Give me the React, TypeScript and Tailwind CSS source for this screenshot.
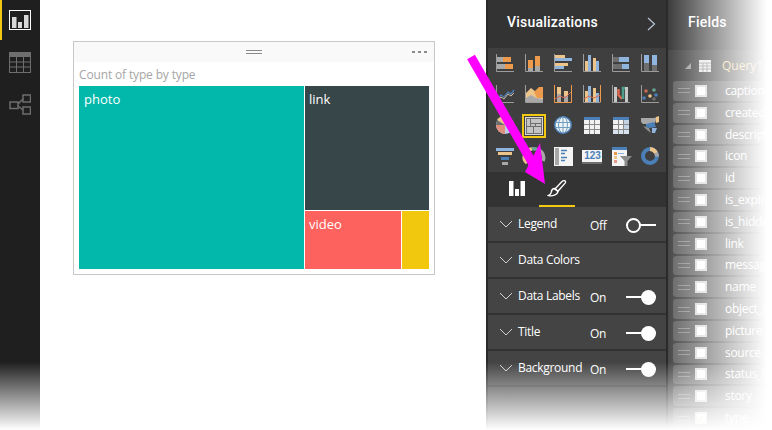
import type { ReactNode } from 'react';

const O = '#ee9a4d';
const T = '#edc58a';
const B = '#8fb4dd';
const G = '#a8a8a8';
const D = '#6e6e6e';
const A = '#9c9c9c';
const R = '#d9694f';
const M = '#4a7fb8';

const Axis = () => <path d="M.5 0V17.5H18" stroke={A} fill="none" />;

const Bar = ({ x, y, w, h, c }: { x: number; y: number; w: number; h: number; c: string }) => (
  <rect x={x} y={y} width={w} height={h} fill={c} />
);

const VIZ_ICONS: ReactNode[] = [
  <><Axis /><Bar x={1} y={3} w={6} h={5} c={G} /><Bar x={7} y={3} w={8} h={5} c={O} /><Bar x={1} y={10} w={8} h={5} c={G} /><Bar x={9} y={10} w={8} h={5} c={O} /></>,
  <><Axis /><Bar x={3} y={6} w={5} h={8} c={O} /><Bar x={3} y={14} w={5} h={3} c={G} /><Bar x={10} y={2} w={5} h={10} c={O} /><Bar x={10} y={12} w={5} h={5} c={G} /></>,
  <><Axis /><Bar x={1} y={1} w={10} h={3} c={T} /><Bar x={1} y={4} w={17} h={3} c={B} /><Bar x={1} y={9} w={13} h={3} c={T} /><Bar x={1} y={12} w={9} h={3} c={B} /></>,
  <><Axis /><Bar x={2} y={7} w={3} h={10} c={T} /><Bar x={5} y={1} w={3} h={16} c={B} /><Bar x={10} y={4} w={3} h={13} c={T} /><Bar x={13} y={7} w={3} h={10} c={B} /></>,
  <><Axis /><Bar x={1} y={3} w={6} h={5} c={D} /><Bar x={7} y={3} w={10} h={5} c={B} /><Bar x={1} y={10} w={9} h={5} c={D} /><Bar x={10} y={10} w={7} h={5} c={B} /></>,
  <><Axis /><Bar x={3} y={1} w={5} h={8} c={B} /><Bar x={3} y={9} w={5} h={8} c={D} /><Bar x={11} y={1} w={5} h={10} c={B} /><Bar x={11} y={11} w={5} h={6} c={D} /></>,
  <><Axis /><path d="M1 14L5 10L8 12L12 7L15 9L18 5" stroke={M} strokeWidth="1.3" fill="none" /><path d="M1 16L5 12L8 14L12 9L15 11L18 8" stroke="#d8b9a0" fill="none" /></>,
  <><Axis /><path d="M1 8L6 3L11 7L14 3H18V17H1Z" fill={T} /><path d="M9 7L14 2H18V13H12Z" fill={O} /><path d="M1 13L6 10L11 13L18 14V17H1Z" fill={G} /></>,
  <><path d="M.5 0V17.5H17.5V0" stroke={O} fill="none" /><Bar x={3} y={2} w={4} h={7} c={T} /><Bar x={3} y={9} w={4} h={8} c={G} /><Bar x={10} y={6} w={4} h={5} c={T} /><Bar x={10} y={11} w={4} h={6} c={G} /><path d="M1 14L6 11L11 13L17 7" stroke={R} fill="none" /></>,
  <><path d="M.5 0V17.5H17.5" stroke={A} fill="none" /><path d="M17.5 0V17" stroke={O} /><Bar x={2} y={6} w={3} h={11} c={T} /><Bar x={5} y={1} w={3} h={16} c={B} /><Bar x={10} y={3} w={3} h={14} c={T} /><Bar x={13} y={8} w={3} h={9} c={B} /><path d="M1 14L6 11L11 13L17 10" stroke={R} fill="none" /></>,
  <><Axis /><Bar x={2} y={2} w={3} h={15} c="#c8c8c8" /><Bar x={13} y={2} w={3} h={15} c="#c8c8c8" /><path d="M6.5 4V10L10 14" stroke={R} strokeWidth="2.5" fill="none" /><path d="M11 14V3H13" stroke="#4e9c8c" strokeWidth="2.5" fill="none" /></>,
  <><Axis /><circle cx="5" cy="6" r="1.8" fill="#c96a52" /><circle cx="13" cy="5" r="1.8" fill="#6aa595" /><circle cx="3" cy="13" r="1.8" fill={M} /><circle cx="9" cy="11" r="1.8" fill={T} /><circle cx="15" cy="10" r="1.8" fill={M} /><circle cx="13" cy="14" r="1.8" fill={D} /></>,
  <><circle cx="9" cy="9" r="9" fill="#b9cde6" /><path d="M9 9L1 4A9 9 0 0 1 9 0Z" fill={T} /><path d="M9 9V18A9 9 0 0 1 0 9Z" fill="#e08f7c" /><path d="M9 9L0 9L1 4Z" fill={D} /></>,
  <><rect x=".5" y=".5" width="17" height="17" fill={D} stroke="#d8d8d8" /><Bar x={2} y={2} w={3} h={7} c="#c4c4c4" /><Bar x={6} y={2} w={10} h={4} c="#c4c4c4" /><Bar x={6} y={7} w={4} h={2} c="#c4c4c4" /><Bar x={11} y={7} w={5} h={2} c="#c4c4c4" /><Bar x={2} y={10} w={6} h={6} c="#c4c4c4" /><Bar x={9} y={10} w={7} h={6} c="#c4c4c4" /></>,
  <><circle cx="9" cy="9" r="8.2" fill="#eef3f6" stroke={M} strokeWidth="1.5" /><path d="M1 6.5H17M1 11.5H17M9 1V17" stroke="#6f9fc0" /><ellipse cx="9" cy="9" rx="4.5" ry="8" fill="none" stroke="#6f9fc0" /></>,
  <><Bar x={1} y={1} w={16} h={17} c="#f2f2f2" /><Bar x={1} y={1} w={16} h={3} c={M} /><path d="M6.5 4V18M11.5 4V18M1 8.5H17M1 13.5H17" stroke="#8a8a8a" /></>,
  <><Bar x={1} y={1} w={16} h={17} c="#f2f2f2" /><Bar x={1} y={1} w={16} h={3} c={M} /><Bar x={12} y={4} w={5} h={14} c="#c3d3e6" /><Bar x={1} y={13} w={16} h={5} c="#d8e2ee" /><path d="M6.5 4V18M11.5 4V18M1 8.5H17M1 13.5H17" stroke="#8a8a8a" /></>,
  <><path d="M0 2H13L16 1L14 7L8 9L6 8H2L0 6Z" fill={G} /><path d="M5 8L13 6L15 11L9 12L5 11Z" fill={M} /><path d="M2 10L8 12L10 17L6 14Z" fill="#909090" /><path d="M15 1L18 0V6L15 7Z" fill={T} /><path d="M11 12H16L14 17H11Z" fill={B} /></>,
  <><Bar x={0} y={1} w={18} h={3} c={B} /><Bar x={2} y={5} w={14} h={3} c={T} /><Bar x={5} y={10} w={8} h={3} c={M} /><Bar x={6} y={15} w={6} h={3} c={G} /></>,
  <><path d="M2 16A8 8 0 0 1 7 2" stroke={T} strokeWidth="3.5" fill="none" /><path d="M7 2A8 8 0 0 1 13 3" stroke="#6aa595" strokeWidth="3.5" fill="none" /><path d="M13 3A8 8 0 0 1 18 14" stroke={G} strokeWidth="3.5" fill="none" /></>,
  <><Bar x={0} y={0} w={19} h={19} c="#f4f4f4" /><Bar x={1} y={1} w={4} h={17} c={G} /><path d="M7 3.5H13M7 6.5H11M7 10.5H13M7 13.5H11" stroke={M} strokeWidth="1.5" /></>,
  null,
  <><Bar x={0} y={0} w={15} h={19} c="#f4f4f4" /><Bar x={0} y={0} w={15} h={3} c={M} /><Bar x={2} y={5} w={3} h={3} c={O} /><Bar x={2} y={9} w={3} h={3} c={T} /><Bar x={2} y={13} w={3} h={3} c="#e59a8a" /><path d="M6 6.5H12" stroke={B} /><path d="M8 9H20L15.5 14V19L12.5 19V14Z" fill="#8c8c8c" /></>,
  <><circle cx="9" cy="9" r="7" fill="none" stroke={M} strokeWidth="4" /><path d="M9 2A7 7 0 0 1 15 6" fill="none" stroke={T} strokeWidth="4" /><path d="M15 6A7 7 0 0 1 16 9.5" fill="none" stroke={G} strokeWidth="4" /></>,
];

const SECTIONS = [
  { label: 'Legend', state: 'Off' },
  { label: 'Data Colors' },
  { label: 'Data Labels', state: 'On' },
  { label: 'Title', state: 'On' },
  { label: 'Background', state: 'On' },
];

// names are cut off by the panel's fade in the picture
const FIELDS = [
  'caption', 'created_', 'descripti', 'icon', 'id', 'is_expire', 'is_hidde', 'link',
  'messag', 'name', 'object_i', 'picture', 'source', 'status_ty', 'story', 'type',
];

const VizCell = ({ icon, index }: { icon: ReactNode; index: number }) => {
  if (index === 13) {
    return (
      <div className="flex h-[31px] w-7 items-center justify-center">
        <div className="flex h-[24px] w-[24px] items-center justify-center border-2 border-[#f2c811]">
          <svg width="18" height="18" viewBox="0 0 18 18">{icon}</svg>
        </div>
      </div>
    );
  }
  if (index === 21) {
    return (
      <div className="flex h-[31px] w-7 items-center justify-center">
        <div className="flex h-[14px] w-[20px] items-start justify-center border-b-2 border-[#6e6e6e] bg-[#f4f4f4] font-['Liberation_Sans',sans-serif] text-[10px] leading-[11px] font-bold text-[#4a7fb8]">
          123
        </div>
      </div>
    );
  }
  return (
    <div className="flex h-[31px] w-7 items-center justify-center">
      <svg width="19" height="19" viewBox="0 0 19 19" className="overflow-visible">{icon}</svg>
    </div>
  );
};

const Toggle = ({ on }: { on: boolean }) => (
  <div className="relative mt-[1px] ml-auto mr-[10px] h-[16px] w-[30px]">
    <div className="absolute top-[7px] left-0 h-[2px] w-full bg-white" />
    {on ? (
      <div className="absolute top-px right-0 h-[15px] w-[15px] rounded-full bg-white" />
    ) : (
      <div className="absolute top-px left-0 h-[15px] w-[15px] rounded-full border-2 border-white bg-[#444]" />
    )}
  </div>
);

const SectionRow = ({ label, state }: { label: string; state?: string }) => (
  <div className="flex h-[36px] items-center border-b-2 border-[#333] pl-[11px] text-[12px] tracking-[-0.3px] text-white">
    <svg width="14" height="8" viewBox="0 0 14 8" className="shrink-0">
      <path d="M1 1L7 7L13 1" fill="none" stroke="#d0d0d0" />
    </svg>
    <span className="ml-[5px] w-[72px] whitespace-nowrap">{label}</span>
    {state && <span className="mt-[3px]">{state}</span>}
    {state && <Toggle on={state === 'On'} />}
  </div>
);

const FieldRow = ({ name }: { name: string }) => (
  <div className="mb-[2px] ml-[5px] flex h-[20px] w-[130px] items-center rounded-[3px] bg-[#5f5f5f] pl-[5px] text-[12px] tracking-[-0.3px] text-white">
    <div className="h-[5px] w-[12px] shrink-0 border-y border-[#8e8e8e]" />
    <div className="ml-[5px] flex h-[12px] w-[12px] shrink-0 items-center justify-center border-2 border-[#d8d8d8] bg-white text-[9px] leading-none text-[#e0c060]">
      {name === 'type' ? '✓' : ''}
    </div>
    <span className="ml-[18px] whitespace-nowrap">{name}</span>
  </div>
);

const NavRail = () => (
  <aside className="flex w-10 shrink-0 flex-col bg-[#1f1f1f]">
    <div className="flex h-10 items-center justify-center border-l-2 border-[#f2c811] pr-[2px]">
      <svg width="22" height="21" viewBox="0 0 22 21">
        <rect x=".5" y=".5" width="21" height="19" fill="none" stroke="#fff" />
        <path d="M3 7H7.5V18H3ZM9 12H13V18H9ZM15 5H19.5V18H15Z" fill="#d8d8d8" />
      </svg>
    </div>
    <div className="mt-[11px] flex h-[22px] items-center justify-center">
      <svg width="22" height="21" viewBox="0 0 22 21">
        <rect x=".5" y=".5" width="21" height="20" fill="none" stroke="#6e6e6e" />
        <rect width="22" height="5" fill="#6e6e6e" />
        <path d="M7.5 5V20M14.5 5V20M1 10H21M1 15H21" stroke="#6e6e6e" />
      </svg>
    </div>
    <div className="mt-[20px] flex h-[22px] items-center justify-center">
      <svg width="22" height="21" viewBox="0 0 22 21" fill="none" stroke="#6e6e6e" strokeWidth="1.5">
        <rect x="1" y="8" width="8" height="6.5" />
        <rect x="14" y="1" width="7.5" height="7" />
        <rect x="14" y="13" width="7.5" height="7" />
        <path d="M9 10L14 5M9 12L14 16" />
      </svg>
    </div>
  </aside>
);

const Treemap = () => (
  <div className="flex h-[183px] gap-px text-[13px] leading-none text-white">
    <div className="w-[225px] bg-[#01b8aa] pt-[7px] pl-[5px]">photo</div>
    <div className="flex flex-1 flex-col gap-px">
      <div className="h-[124px] bg-[#374649] pt-[7px] pl-[4px]">link</div>
      <div className="flex flex-1 gap-px">
        <div className="w-[96px] bg-[#fd625e] pt-[7px] pl-[4px]">video</div>
        <div className="flex-1 bg-[#f2c80f]" />
      </div>
    </div>
  </div>
);

const Canvas = () => (
  <main className="w-[446px] shrink-0 bg-white pt-[41px] pl-[33px]">
    <div className="h-[234px] w-[362px] border border-[#c8c8c8] bg-white">
      <div className="relative flex h-[20px] items-center justify-center bg-[#f9f9f9]">
        <div className="h-[4px] w-[16px] border-y border-[#8a8a8a]" />
        <div className="absolute top-[9px] right-[7px] flex gap-[3px]">
          <i className="h-[2px] w-[3px] bg-[#8a8a8a]" />
          <i className="h-[2px] w-[3px] bg-[#8a8a8a]" />
          <i className="h-[2px] w-[3px] bg-[#8a8a8a]" />
        </div>
      </div>
      <div className="h-[24px] pt-[5px] pl-[5px] text-[12px] leading-[16px] tracking-[-0.15px] text-[#a6a6a6]">Count of type by type</div>
      <div className="px-[5px]">
        <Treemap />
      </div>
    </div>
  </main>
);

const VizPanel = () => (
  <section className="flex w-[182px] shrink-0 flex-col border-x-2 border-x-[#2a2a2a] bg-[#3f3f3f]">
    <header className="flex h-[48px] shrink-0 items-center bg-[#333] pb-[4px] pl-[19px] font-['Roboto',sans-serif] text-[14px] font-medium tracking-[0.2px] text-white">
      Visualizations
      <svg width="9" height="14" viewBox="0 0 9 14" className="mt-[4px] ml-[49px]">
        <path d="M1 1L7.5 7L1 13" fill="none" stroke="#b8c4d4" strokeWidth="1.2" />
      </svg>
    </header>
    <div className="grid h-[124px] shrink-0 grid-cols-6 bg-[#3f3f3f] pl-[3px]">
      {VIZ_ICONS.map((icon, i) => (
        <VizCell key={i} icon={icon} index={i} />
      ))}
    </div>
    <div className="flex h-[35px] shrink-0 bg-[#333]">
      <div className="flex w-[51px] items-center justify-center pb-[4px] pl-[7px]">
        <svg width="16" height="16" viewBox="0 0 16 16">
          <path d="M0 1H4.5V16H0ZM6 9H10V16H6ZM11.5 1H16V16H11.5Z" fill="#fff" />
        </svg>
      </div>
      <div className="flex w-[36px] items-center justify-center border-b-2 border-[#f2c811] pb-[2px]">
        <svg width="20" height="18" viewBox="0 0 20 18" fill="none" stroke="#fff" strokeWidth="1.4">
          <path d="M8 10L15 2.5C16.5 1 19 1.5 18.5 3.5C18 4.5 17 5.5 11 12Z" />
          <path d="M7.5 9.5C4.5 9.5 4.5 12 4 14C3.5 15.5 2.5 16 1.5 16.5C5 17.5 10.5 16 11 12.5Z" />
        </svg>
      </div>
    </div>
    <div className="flex-1 bg-[#444]">
      {SECTIONS.map(s => (
        <SectionRow key={s.label} label={s.label} state={s.state} />
      ))}
    </div>
  </section>
);

const FieldsPanel = () => (
  <section className="relative flex flex-1 flex-col overflow-hidden bg-[#3f3f3f]">
    <header className="flex h-[50px] shrink-0 items-center bg-[#333] pb-[6px] pl-[20px] font-['Roboto',sans-serif] text-[14px] font-medium tracking-[0.2px] text-white">
      Fields
    </header>
    <div className="flex h-[31px] shrink-0 items-center pl-[17px] text-[12px] text-[#f0d78a]">
      <svg width="6" height="6" viewBox="0 0 6 6"><path d="M6 0V6H0Z" fill="#9a9a9a" /></svg>
      <svg width="12" height="12" viewBox="0 0 12 12" className="ml-[8px]">
        <rect width="12" height="12" fill="#e8e8e8" />
        <path d="M4 3V12M8 3V12M0 3H12M0 6H12M0 9H12" stroke="#777" strokeWidth=".7" />
      </svg>
      <span className="ml-[11px]">Query1</span>
    </div>
    {FIELDS.map(f => (
      <FieldRow key={f} name={f} />
    ))}
    <div className="absolute inset-0 bg-gradient-to-r from-white/5 to-white to-95%" />
  </section>
);

export default function App() {
  return (
    <div className="relative flex h-[430px] w-[772px] overflow-hidden bg-white font-['Open_Sans','Noto_Sans',sans-serif]">
      <NavRail />
      <Canvas />
      <VizPanel />
      <FieldsPanel />
      <div className="absolute inset-x-0 top-[362px] h-[68px] bg-gradient-to-b from-white/0 to-white" />
      <svg width="90" height="140" viewBox="0 0 90 140" className="absolute top-[52px] left-[462px]">
        <path d="M9 5L71 112" stroke="#ff00ff" strokeWidth="9" fill="none" />
        <path d="M78 91L83 132L63 120Z" fill="#ff00ff" />
      </svg>
    </div>
  );
}
